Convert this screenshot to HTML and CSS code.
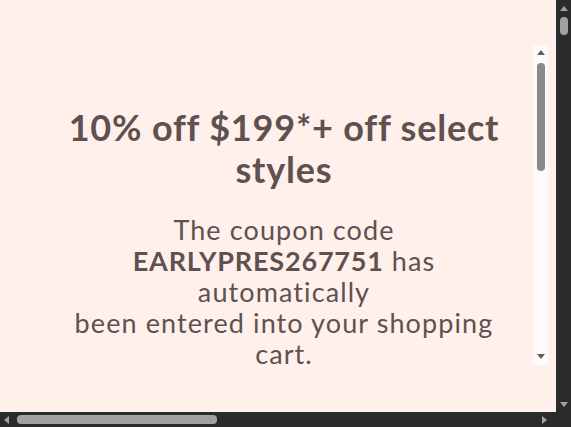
FILE: index.html
```html
<!DOCTYPE html>
<html lang="en">
<head>
    <meta charset="UTF-8">
    <meta name="viewport" content="width=device-width, initial-scale=1.0">
    <title>Coupon Applied</title>
    <link rel="stylesheet" href="styles.css">
</head>
<body>
    <div class="window">
        <!-- Page area -->
        <div class="viewport">
            <div class="coupon-box">
                <div class="coupon-content">
                    <h2 class="coupon-title">10% off $199*+ off select styles</h2>
                    <p class="coupon-text">
                        The coupon code <strong>EARLYPRES267751</strong> has automatically<br>
                        been entered into your shopping cart.
                    </p>
                </div>
                <!-- Inner scrollbar -->
                <div class="inner-scroll">
                    <span class="arrow arrow-up"></span>
                    <span class="inner-thumb"></span>
                    <span class="arrow arrow-down"></span>
                </div>
            </div>
        </div>

        <!-- Page scrollbars -->
        <div class="vbar">
            <span class="arrow arrow-up light"></span>
            <span class="vbar-thumb"></span>
            <span class="arrow arrow-down light"></span>
        </div>
        <div class="hbar">
            <span class="arrow arrow-left light"></span>
            <span class="hbar-thumb"></span>
            <span class="arrow arrow-right light"></span>
        </div>
        <div class="corner"></div>
    </div>
</body>
</html>
```

FILE: styles.css
```css
/* Global Styles */
* {
    margin: 0;
    padding: 0;
    box-sizing: border-box;
}
body {
    font-family: 'Lato', sans-serif;
    background: #fff0ec;
    color: #5e5150;
    overflow: hidden;
}

/* Window with scrollbars */
.window {
    display: grid;
    grid-template-columns: 1fr 15px;
    grid-template-rows: 1fr 15px;
    width: 100vw;
    height: 100vh;
}

.viewport {
    background: #fff0ec;
    padding: 45px 8px 0;
    overflow: hidden;
}

/* Coupon Box */
.coupon-box {
    display: flex;
    width: 540px;
    height: 320px;
}

.coupon-content {
    flex: 1;
    padding: 61px 0 0 27px;
    text-align: center;
}

.coupon-title {
    font-size: 36px;
    font-weight: 700;
    line-height: 42px;
    letter-spacing: 0.8px;
    margin-bottom: 24px;
}

.coupon-text {
    max-width: 440px;
    margin: 0 auto;
    font-size: 27px;
    line-height: 31px;
    letter-spacing: 1.1px;
}

.coupon-text strong {
    font-weight: 700;
    letter-spacing: 0.8px;
}

/* Inner scrollbar */
.inner-scroll {
    width: 15px;
    display: flex;
    flex-direction: column;
    align-items: center;
    background: #fdfaf9;
    padding: 5px 0 6px;
}

.inner-thumb {
    width: 8px;
    height: 108px;
    margin-top: 8px;
    border-radius: 4px;
    background: #8a8a8a;
}

.inner-scroll .arrow-down {
    margin-top: auto;
}

/* Arrows */
.arrow {
    width: 0;
    height: 0;
    border-style: solid;
    border-color: transparent;
}
.arrow-up {
    border-width: 0 4px 5px;
    border-bottom-color: #606060;
}
.arrow-down {
    border-width: 5px 4px 0;
    border-top-color: #606060;
}
.arrow-left {
    border-width: 4px 5px 4px 0;
    border-right-color: #606060;
}
.arrow-right {
    border-width: 4px 0 4px 5px;
    border-left-color: #606060;
}
.arrow-up.light {
    border-bottom-color: #a3a3a3;
}
.arrow-down.light {
    border-top-color: #a3a3a3;
}
.arrow-left.light {
    border-right-color: #a3a3a3;
}
.arrow-right.light {
    border-left-color: #a3a3a3;
}

/* Page scrollbars */
.vbar,
.hbar,
.corner {
    background: #2b2b2b;
}

.vbar {
    display: flex;
    flex-direction: column;
    align-items: center;
    padding: 6px 0 5px;
}

.vbar-thumb {
    width: 8px;
    height: 18px;
    margin-top: 6px;
    border-radius: 4px;
    background: #a1a1a1;
}

.vbar .arrow-down {
    margin-top: auto;
}

.hbar {
    display: flex;
    align-items: center;
    padding: 0 9px 0 4px;
}

.hbar-thumb {
    width: 200px;
    height: 9px;
    margin-left: 8px;
    border-radius: 4px;
    background: #a1a1a1;
}

.hbar .arrow-right {
    margin-left: auto;
}
```
